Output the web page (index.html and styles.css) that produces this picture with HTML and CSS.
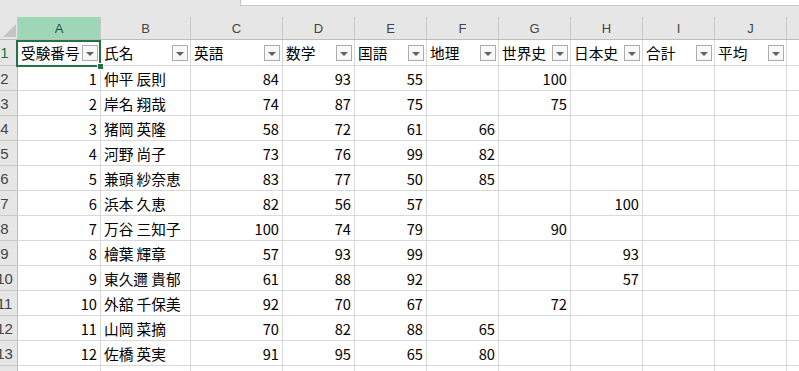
FILE: index.html
```html
<!DOCTYPE html>
<html lang="ja">
<head>
    <meta charset="UTF-8">
    <meta name="viewport" content="width=device-width, initial-scale=1.0">
    <title>成績一覧</title>
    <link rel="stylesheet" href="styles.css">
</head>
<body>
    <div class="topbar">
        <div class="formula-edge"></div>
    </div>

    <table class="sheet">
        <colgroup>
            <col class="w-rowhead">
            <col class="w-a">
            <col class="w-b">
            <col class="w-c">
            <col class="w-std"><col class="w-std"><col class="w-std"><col class="w-std">
            <col class="w-std"><col class="w-std"><col class="w-std">
            <col class="w-rest">
        </colgroup>
        <thead>
            <tr class="col-heads">
                <th class="corner">
                    <svg width="26" height="22" viewBox="0 0 26 22"><polygon points="24,7 24,20 11,20" fill="#c4c4c4"/></svg>
                </th>
                <th class="col-selected">A</th>
                <th>B</th><th>C</th><th>D</th><th>E</th><th>F</th>
                <th>G</th><th>H</th><th>I</th><th>J</th><th></th>
            </tr>
        </thead>
        <tbody>
            <tr class="row-first">
                <th class="row-head row-active">1</th>
                <td><div class="filter-cell"><span>受験番号</span><span class="filter-btn"></span></div></td>
                <td><div class="filter-cell"><span>氏名</span><span class="filter-btn"></span></div></td>
                <td><div class="filter-cell"><span>英語</span><span class="filter-btn"></span></div></td>
                <td><div class="filter-cell"><span>数学</span><span class="filter-btn"></span></div></td>
                <td><div class="filter-cell"><span>国語</span><span class="filter-btn"></span></div></td>
                <td><div class="filter-cell"><span>地理</span><span class="filter-btn"></span></div></td>
                <td><div class="filter-cell"><span>世界史</span><span class="filter-btn"></span></div></td>
                <td><div class="filter-cell"><span>日本史</span><span class="filter-btn"></span></div></td>
                <td><div class="filter-cell"><span>合計</span><span class="filter-btn"></span></div></td>
                <td><div class="filter-cell"><span>平均</span><span class="filter-btn"></span></div></td>
                <td></td>
            </tr>
            <tr><th class="row-head">2</th><td class="num">1</td><td>仲平 辰則</td><td class="num">84</td><td class="num">93</td><td class="num">55</td><td></td><td class="num">100</td><td></td><td></td><td></td><td></td></tr>
            <tr><th class="row-head">3</th><td class="num">2</td><td>岸名 翔哉</td><td class="num">74</td><td class="num">87</td><td class="num">75</td><td></td><td class="num">75</td><td></td><td></td><td></td><td></td></tr>
            <tr><th class="row-head">4</th><td class="num">3</td><td>猪岡 英隆</td><td class="num">58</td><td class="num">72</td><td class="num">61</td><td class="num">66</td><td></td><td></td><td></td><td></td><td></td></tr>
            <tr><th class="row-head">5</th><td class="num">4</td><td>河野 尚子</td><td class="num">73</td><td class="num">76</td><td class="num">99</td><td class="num">82</td><td></td><td></td><td></td><td></td><td></td></tr>
            <tr><th class="row-head">6</th><td class="num">5</td><td>兼頭 紗奈恵</td><td class="num">83</td><td class="num">77</td><td class="num">50</td><td class="num">85</td><td></td><td></td><td></td><td></td><td></td></tr>
            <tr><th class="row-head">7</th><td class="num">6</td><td>浜本 久恵</td><td class="num">82</td><td class="num">56</td><td class="num">57</td><td></td><td></td><td class="num">100</td><td></td><td></td><td></td></tr>
            <tr><th class="row-head">8</th><td class="num">7</td><td>万谷 三知子</td><td class="num">100</td><td class="num">74</td><td class="num">79</td><td></td><td class="num">90</td><td></td><td></td><td></td><td></td></tr>
            <tr><th class="row-head">9</th><td class="num">8</td><td>檜葉 輝章</td><td class="num">57</td><td class="num">93</td><td class="num">99</td><td></td><td></td><td class="num">93</td><td></td><td></td><td></td></tr>
            <tr><th class="row-head">10</th><td class="num">9</td><td>東久邇 貴郁</td><td class="num">61</td><td class="num">88</td><td class="num">92</td><td></td><td></td><td class="num">57</td><td></td><td></td><td></td></tr>
            <tr><th class="row-head">11</th><td class="num">10</td><td>外舘 千保美</td><td class="num">92</td><td class="num">70</td><td class="num">67</td><td></td><td class="num">72</td><td></td><td></td><td></td><td></td></tr>
            <tr><th class="row-head">12</th><td class="num">11</td><td>山岡 菜摘</td><td class="num">70</td><td class="num">82</td><td class="num">88</td><td class="num">65</td><td></td><td></td><td></td><td></td><td></td></tr>
            <tr><th class="row-head">13</th><td class="num">12</td><td>佐橋 英実</td><td class="num">91</td><td class="num">95</td><td class="num">65</td><td class="num">80</td><td></td><td></td><td></td><td></td><td></td></tr>
            <tr><th class="row-head">14</th><td></td><td></td><td></td><td></td><td></td><td></td><td></td><td></td><td></td><td></td><td></td></tr>
        </tbody>
    </table>

    <!-- active cell A1 -->
    <div class="selection"><span class="fill-handle"></span></div>
</body>
</html>
```

FILE: styles.css
```css
/* Sheet window */
body {
    margin: 0;
    overflow: hidden;
    background: #ffffff;
    font-family: "Noto Sans CJK JP", "Noto Sans", sans-serif;
    color: #000000;
    position: relative;
    width: 799px;
    height: 371px;
}

.topbar {
    height: 17px;
    background: #e6e6e6;
}
.formula-edge {
    margin-left: 240px;
    height: 5px;
    background: #ffffff;
    border-left: 1px solid #c6c6c6;
    border-bottom: 1px solid #c6c6c6;
}

.sheet {
    margin-left: -9px;
    border-collapse: collapse;
    table-layout: fixed;
    width: 848px;
}
.w-rowhead { width: 26px; }
.w-a { width: 83px; }
.w-b { width: 90px; }
.w-c { width: 92px; }
.w-std { width: 72px; }
.w-rest { width: 61px; }

td, th {
    padding: 0;
    border: 1px solid #d9d9d9;
    white-space: nowrap;
    overflow: hidden;
}

/* column letters */
.col-heads th {
    height: 21px;
    background: #e6e6e6;
    border-top: none;
    border-left: 1px solid #c9c9c9;
    border-right: 1px solid #c9c9c9;
    border-bottom: 1px solid #bdbdbd;
    font-family: "Liberation Sans", Arial, sans-serif;
    font-weight: normal;
    font-size: 13px;
    color: #444444;
    text-align: center;
    padding-top: 1px;
}
.col-heads th.corner {
    padding: 0;
    vertical-align: top;
}
.corner svg {
    display: block;
}
.col-heads th.col-selected {
    background: #a0d6b8;
    color: #1d5233;
}

/* row numbers */
.row-head {
    background: #e6e6e6;
    border-color: #c9c9c9;
    border-right: 1px solid #bdbdbd;
    font-family: "Liberation Sans", Arial, sans-serif;
    font-weight: normal;
    font-size: 15px;
    line-height: 20px;
    color: #444444;
    text-align: center;
    padding-top: 1px;
}
.row-active {
    color: #217346;
}

tbody tr {
    height: 25px;
}
tbody tr.row-first {
    height: 26px;
}

td {
    font-size: 14.67px;
    line-height: 20px;
    padding: 1px 3px 0;
    vertical-align: middle;
}
td.num {
    text-align: right;
    padding-right: 3px;
}

/* header cells with autofilter buttons */
.filter-cell {
    display: flex;
    align-items: center;
    justify-content: space-between;
    margin-right: -1px;
}
.filter-btn {
    flex: none;
    width: 14px;
    height: 14px;
    border: 1px solid #acacac;
    background: #f7f7f7;
    display: flex;
    align-items: center;
    justify-content: center;
}
.filter-btn::after {
    content: '';
    border-left: 4px solid transparent;
    border-right: 4px solid transparent;
    border-top: 4px solid #606060;
    margin-top: 2px;
}

/* active cell outline */
.selection {
    position: absolute;
    left: 16px;
    top: 40px;
    width: 85px;
    height: 27px;
    box-sizing: border-box;
    border: 2px solid #217346;
}
.fill-handle {
    position: absolute;
    right: -5px;
    bottom: -5px;
    width: 5px;
    height: 5px;
    background: #217346;
    border: 1px solid #ffffff;
}
```
